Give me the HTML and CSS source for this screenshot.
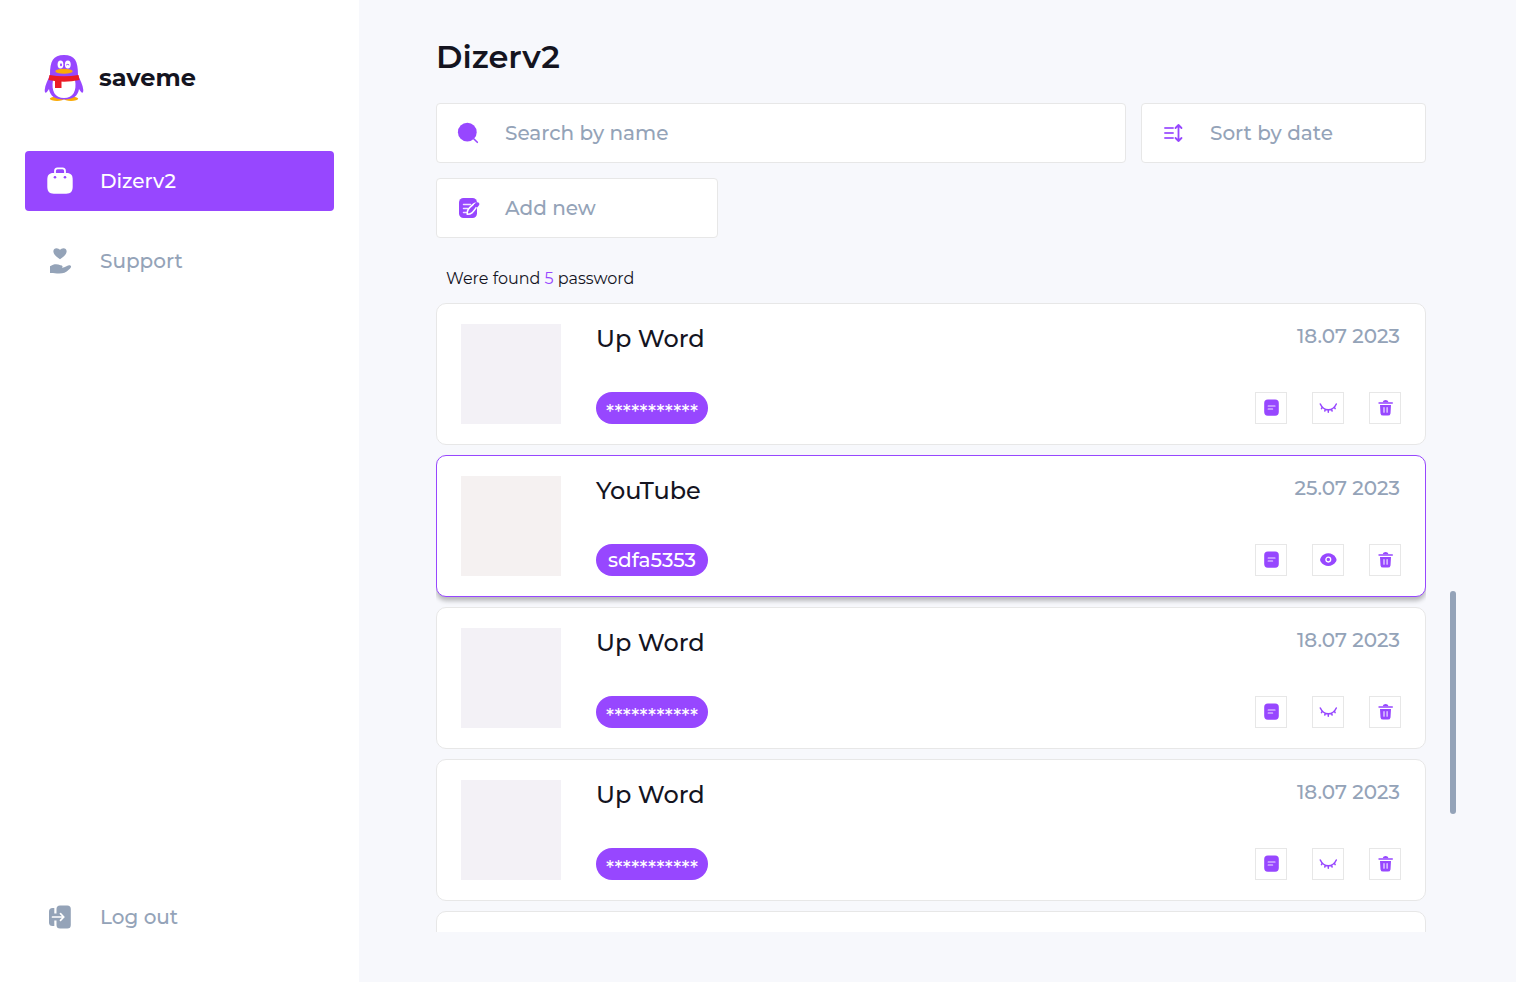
FILE: index.html
```html
<!DOCTYPE html>
<html lang="en">
<head>
<meta charset="utf-8">
<title>saveme</title>
<link rel="stylesheet" href="styles.css">
</head>
<body>
<svg class="sprite" aria-hidden="true">
  <symbol id="note" viewBox="0 0 16 18"><rect x="1.200" y=".5" width="14.600" height="16.200" rx="3.600" fill="#9747ff"/><path d="M5.200 7h6.800M5.200 10h4.400" stroke="#fff" stroke-opacity=".85" stroke-width="1.200" stroke-linecap="round"/></symbol>
  <symbol id="closed" viewBox="0 0 18 10"><path d="M1.300 1c3.400 7.600 12.600 7.600 16 0M3.300 4.200 2.500 5.600M6.300 6.200 5.800 8M9.300 6.800v2.400M12.600 6.200l.5 1.800M15.300 4.200l.8 1.400" fill="none" stroke="#9747ff" stroke-width="1.500" stroke-linecap="round"/></symbol>
  <symbol id="open" viewBox="0 0 18 14"><path d="M1.600 4.900C5-1.200 13.600-1.200 17 4.900q1 1.800 0 3.600C13.600 14.400 5 14.400 1.600 8.500q-1-1.800 0-3.600z" fill="#9747ff"/><circle cx="9.300" cy="6.600" r="2.400" fill="none" stroke="#fff" stroke-width="1.300"/></symbol>
  <symbol id="trash" viewBox="0 0 16 18"><path d="M5.800 3.300C6.200.2 11 .2 11.400 3.300M3 6h11l-.5 8.400q-.3 2.200-2.600 2.200H6.100q-2.300 0-2.600-2.200z" fill="#9747ff"/><path d="M2 4h13.300" stroke="#9747ff" stroke-width="1.400" stroke-linecap="round"/><path d="M7 8.700v4.500M10.100 8.700v4.500" stroke="#fff" stroke-opacity=".85" stroke-width="1.200" stroke-linecap="round"/></symbol>
</svg>
<div class="app">
  <aside class="sidebar">
    <div class="brand">
      <svg class="logo" viewBox="0 0 40 48" width="40" height="48">
        <ellipse cx="13" cy="44.800" rx="7.200" ry="2.200" fill="#faab07"/><ellipse cx="27" cy="44.800" rx="7.200" ry="2.200" fill="#faab07"/>
        <path d="M6 21C6 7 9 1 20 1s14 6 14 20c2 5 5 10 5.300 15 0 4-1.700 3.500-4.300-1-1 7-6 10.500-15 10.500S6 42 5 35c-2.600 4.500-4.300 5-4.300 1C1 31 4 26 6 21z" fill="#9747ff"/>
        <path d="M9 26h22c2 11-2 18-11 18S7 37 9 26z" fill="#fff"/>
        <path d="M11 26h6.500v8H11z" fill="#eb1c26"/><path d="M5.500 21q14.500 2.500 29 0l1 5q-15.500 3.500-31 0z" fill="#eb1c26"/>
        <ellipse cx="16.500" cy="10.500" rx="2.900" ry="3.900" fill="#fff"/><ellipse cx="23.800" cy="10.500" rx="2.900" ry="3.900" fill="#fff"/>
        <ellipse cx="17" cy="10.700" rx="1" ry="1.500" fill="#9747ff"/><path d="M22.200 11q1.500-1.300 3 0" fill="none" stroke="#9747ff"/>
        <ellipse cx="20" cy="17.300" rx="8.700" ry="2.500" fill="#faab07"/>
      </svg>
      <span class="brand-name">saveme</span>
    </div>
    <nav class="nav">
      <a class="nav-item active"><svg width="26" height="28" viewBox="0 0 26 28"><path d="M8 7.500V4Q8 1.300 10.500 1.300h5Q18 1.300 18 4v3.500" fill="none" stroke="#fff" stroke-width="1.800"/><path d="M.3 13C.3 8 2 6 6.500 6h13c4.500 0 6.200 2 6.200 7v6.500c0 5-2 7.200-6.500 7.200H6.800C2.300 26.700.3 24.500.3 19.500z" fill="#fff"/><circle cx="8" cy="10.300" r="1.300" fill="#9747ff"/><circle cx="18" cy="10.300" r="1.300" fill="#9747ff"/></svg><span>Dizerv2</span></a>
      <a class="nav-item"><svg width="26" height="28" viewBox="0 0 26 28"><path d="M13 12.200C3.500 6.300 6 1.300 9.500 1.300q2.300 0 3.500 1.500 1.200-1.500 3.500-1.500C20 1.300 22.500 6.300 13 12.200z" fill="#94a3b8"/><path d="M3 19.300c3.500-2.300 7-2.600 10.500-1 2.200 0 2.800 1.700 1.300 2.400 3.500.2 5-2.400 7.200-2.400 3 0 2.600 2.200 0 4.300-3.200 3-5.700 4-9.700 4-4 0-6-.8-9.300-.6z" fill="#94a3b8"/></svg><span>Support</span></a>
    </nav>
    <a class="nav-item logout"><svg width="26" height="28" viewBox="0 0 26 28"><path d="M7.300 5H5.500Q2 5 2 8.500v11Q2 23 5.500 23h1.800z" fill="#94a3b8"/><path d="M6.500 10.500h4v7h-4z" fill="#94a3b8"/><path d="M9.500 9.800V6Q9.500 2.500 13 2.500h7.300q3.500 0 3.500 3.500v16q0 3.500-3.500 3.500H13q-3.500 0-3.500-3.500z" fill="#94a3b8"/><path d="M5.500 14H16.800M13.500 10.700 16.800 14l-3.300 3.300" fill="none" stroke="#fff" stroke-width="1.700" stroke-linecap="round" stroke-linejoin="round"/></svg><span>Log out</span></a>
  </aside>
  <main class="main">
    <h1 class="title">Dizerv2</h1>
    <div class="controls">
      <div class="control search"><svg width="24" height="24" viewBox="0 0 24 24"><circle cx="11.300" cy="11.200" r="9.400" fill="#9747ff"/><path d="m18 18 3.300 3.300" stroke="#9747ff" stroke-width="1.600" stroke-linecap="round"/></svg><span>Search by name</span></div>
      <div class="control sort"><svg width="24" height="24" viewBox="0 0 24 24"><path d="M4 7h8M4 12h8M4 17h8" stroke="#9747ff" stroke-opacity=".85" stroke-width="1.900" stroke-linecap="round"/><path d="M17.500 4v16M14.500 7l3-3 3 3M14.500 17l3 3 3-3" fill="none" stroke="#9747ff" stroke-width="1.800" stroke-linecap="round" stroke-linejoin="round"/></svg><span>Sort by date</span></div>
      <div class="control add"><svg width="24" height="24" viewBox="0 0 24 24"><rect x="3" y="2" width="18" height="20" rx="4.500" fill="#9747ff"/><path d="M7.500 8.500H14.500M7.500 12.500h4M7.500 16.500h3" stroke="#fff" stroke-opacity=".85" stroke-width="1.500" stroke-linecap="round"/><path d="M11.200 18.300c-.3-4 .8-5.500 6.300-10.200q2-1.500 3.200-.2 1.200 1.300-.2 3.200c-3.800 5.600-5.300 7.200-9.300 7.200z" fill="#9747ff" stroke="#fff" stroke-width="1.600" stroke-linejoin="round"/><path d="m19 8.500 1.300-1.100q1.500-.9 2.200.2.400 1-.6 1.900l-1 1z" fill="#9747ff" stroke="#9747ff" stroke-width="1.600"/></svg><span>Add new</span></div>
    </div>
    <p class="found">Were found <b>5</b> password</p>
    <div class="results">
      <div class="list">
        <article class="card"><div class="thumb"></div><div class="info"><h2>Up Word</h2><span class="pill stars">***********</span></div><div class="side"><time>18.07 2023</time><div class="actions"><i><svg width="16" height="18"><use href="#note"/></svg></i><i><svg width="18" height="10"><use href="#closed"/></svg></i><i><svg width="16" height="18"><use href="#trash"/></svg></i></div></div></article>
        <article class="card selected"><div class="thumb warm"></div><div class="info"><h2>Yo<span class="tight">u</span>Tube</h2><span class="pill">sdfa5353</span></div><div class="side"><time>25.07 2023</time><div class="actions"><i><svg width="16" height="18"><use href="#note"/></svg></i><i><svg width="18" height="14"><use href="#open"/></svg></i><i><svg width="16" height="18"><use href="#trash"/></svg></i></div></div></article>
        <article class="card"><div class="thumb"></div><div class="info"><h2>Up Word</h2><span class="pill stars">***********</span></div><div class="side"><time>18.07 2023</time><div class="actions"><i><svg width="16" height="18"><use href="#note"/></svg></i><i><svg width="18" height="10"><use href="#closed"/></svg></i><i><svg width="16" height="18"><use href="#trash"/></svg></i></div></div></article>
        <article class="card"><div class="thumb"></div><div class="info"><h2>Up Word</h2><span class="pill stars">***********</span></div><div class="side"><time>18.07 2023</time><div class="actions"><i><svg width="16" height="18"><use href="#note"/></svg></i><i><svg width="18" height="10"><use href="#closed"/></svg></i><i><svg width="16" height="18"><use href="#trash"/></svg></i></div></div></article>
        <article class="card"></article>
      </div>
      <div class="scrollbar"></div>
    </div>
  </main>
</div>
</body>
</html>
```
FILE: styles.css
```css
*{box-sizing:border-box}
body{margin:0;font-family:Montserrat,Inter,sans-serif;color:#14141f;background:#f7f8fc}
.sprite{position:absolute;width:0;height:0}
.app{display:flex;height:982px;overflow:hidden}
.sidebar{width:359px;background:#fff;padding:54px 25px 35px;display:flex;flex-direction:column}
.brand{display:flex;align-items:center;gap:15px;height:48px;padding-left:19px}
.brand-name{font-size:24px;font-weight:700;padding-bottom:2px}
.nav{margin-top:49px;display:flex;flex-direction:column;gap:20px}
.nav-item{display:flex;align-items:center;height:60px;padding-left:22px;gap:27px;font-size:20px;font-weight:500;color:#94a3b8;border-radius:4px}
.active{background:#9747ff;color:#fff}
.logout{margin-top:auto}
.main{flex:1;padding:34px 60px 50px 77px;display:flex;flex-direction:column}
.title{margin:0;font-size:32px;line-height:46px;font-weight:600}
.controls{display:flex;flex-wrap:wrap;gap:15px;margin-top:23px;width:990px}
.control{height:60px;background:#fff;border:1px solid #e7e7e7;border-radius:4px;display:flex;align-items:center;padding-left:19px;gap:25px;font-size:20px;font-weight:500;color:#94a3b8}
.search{width:690px}
.sort{width:285px}
.add{width:282px}
.found{margin:30px 0 14px 10px;font-size:16px;line-height:21px}
.found b{font-weight:400;color:#9747ff}
.results{display:flex;gap:24px;height:629px}
.list{display:flex;flex-direction:column;gap:10px;width:990px;overflow:hidden}
.scrollbar{width:6px;height:223px;margin-top:288px;border-radius:3px;background:#94a3b8}
.card{flex:none;height:142px;background:#fff;border:1px solid #e7e7e7;border-radius:10px;padding:20px 24px;display:flex}
.selected{border-color:#9747ff;box-shadow:0 4px 4px rgba(0,0,0,.25)}
.thumb{width:100px;height:100px;background:#f3f1f6;margin-right:35px}
.warm{background:#f5f1f1}
.info{display:flex;flex-direction:column;justify-content:space-between;align-items:flex-start}
h2{margin:0;font-size:24px;line-height:30px;font-weight:500}
.tight{letter-spacing:-1.9px}
.pill{width:112px;height:32px;border-radius:16px;background:#9747ff;color:#fff;display:flex;align-items:center;justify-content:center;font-size:20px;font-weight:500}
.stars{padding-top:7px}
.side{margin-left:auto;display:flex;flex-direction:column;justify-content:space-between;align-items:flex-end}
time{font-size:20px;font-weight:500;line-height:24px;color:#94a3b8;margin-right:1px}
.actions{display:flex;gap:25px}
.actions i{width:32px;height:32px;border:1px solid #e7e7e7;display:flex;align-items:center;justify-content:center}
```
